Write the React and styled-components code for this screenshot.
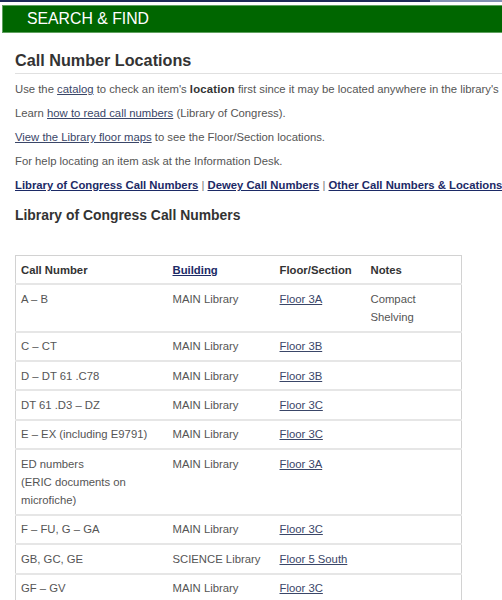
import React from "react";
import styled, { createGlobalStyle } from "styled-components";

const Global = createGlobalStyle`
  html, body { margin: 0; padding: 0; background: #fff; overflow: hidden; }
  body { font-family: "Liberation Sans", Arial, sans-serif; }
`;

const Page = styled.div`
  width: 760px;
`;

const TopStrip = styled.div`
  height: 2px;
  background: linear-gradient(to right, #1d2b58 0, #1d2b58 430px, #8392b4 430px);
`;

const Banner = styled.div`
  margin: 3px 0 0 2px;
  height: 26px;
  background: #006600;
  border: 1px solid #5fa05f;
  border-right: none;
  display: flex;
  align-items: center;
  padding-left: 24px;
  color: #fff;
  font-size: 15.8px;
`;

const Content = styled.div`
  padding: 16px 0 0 15px;
`;

const Title = styled.h1`
  margin: 0;
  font-size: 16.2px;
  line-height: 22px;
  font-weight: bold;
  color: #333;
  padding-bottom: 2px;
  border-bottom: 1px solid #e0e0e0;
`;

const Paras = styled.div`
  margin-top: 6px;
`;

const P = styled.p`
  margin: 0 0 6px;
  font-size: 11.3px;
  line-height: 18px;
  color: #555;
  white-space: nowrap;
`;

const Strong = styled.b`
  color: #333;
  letter-spacing: 0.2px;
`;

const A = styled.a`
  color: ${(p) => (p.$strong ? "#1c2a66" : "#3a4668")};
  font-weight: ${(p) => (p.$strong ? "bold" : "normal")};
  text-decoration: underline;
`;

const Sep = styled.span`
  color: #777;
`;

const Section = styled.h2`
  margin: 10px 0 29px;
  font-size: 13.9px;
  line-height: 22px;
  font-weight: bold;
  color: #333;
`;

const Table = styled.table`
  border-collapse: collapse;
  width: 446px;
  table-layout: fixed;
  border: 1px solid #d2d2d2;
  font-size: 11.3px;
  color: #555;
`;

const Col = styled.col`
  width: ${(p) => p.$w}px;
`;

const Th = styled.th`
  text-align: left;
  font-weight: bold;
  color: #333;
  padding: 5px 5px 4px 5px;
  line-height: 18.3px;
  vertical-align: top;
`;

const Td = styled.td`
  padding: 4.5px 5px;
  line-height: 18.3px;
  vertical-align: top;
  border-top: 2px solid #e6e6e6;
`;

const rows = [
  [["A – B"], "MAIN Library", "Floor 3A", "Compact Shelving"],
  [["C – CT"], "MAIN Library", "Floor 3B", ""],
  [["D – DT 61 .C78"], "MAIN Library", "Floor 3B", ""],
  [["DT 61 .D3 – DZ"], "MAIN Library", "Floor 3C", ""],
  [["E – EX (including E9791)"], "MAIN Library", "Floor 3C", ""],
  [["ED numbers", "(ERIC documents on microfiche)"], "MAIN Library", "Floor 3A", ""],
  [["F – FU, G – GA"], "MAIN Library", "Floor 3C", ""],
  [["GB, GC, GE"], "SCIENCE Library", "Floor 5 South", ""],
  [["GF – GV"], "MAIN Library", "Floor 3C", ""],
  [["H – HJ"], "MAIN Library", "Floor 3C", ""],
];

export default function App() {
  return (
    <Page>
      <Global />
      <TopStrip />
      <Banner>SEARCH &amp; FIND</Banner>
      <Content>
        <Title>Call Number Locations</Title>
        <Paras>
          <P>
            Use the <A href="#">catalog</A> to check an item's <Strong>location</Strong> first since it
            may be located anywhere in the library's collections.
          </P>
          <P>
            Learn <A href="#">how to read call numbers</A> (Library of Congress).
          </P>
          <P>
            <A href="#">View the Library floor maps</A> to see the Floor/Section locations.
          </P>
          <P>For help locating an item ask at the Information Desk.</P>
          <P>
            <A $strong href="#">Library of Congress Call Numbers</A> <Sep>|</Sep>{" "}
            <A $strong href="#">Dewey Call Numbers</A> <Sep>|</Sep>{" "}
            <A $strong href="#">Other Call Numbers &amp; Locations</A>
          </P>
        </Paras>
        <Section>Library of Congress Call Numbers</Section>
        <Table>
          <colgroup>
            <Col $w={152} />
            <Col $w={107} />
            <Col $w={91} />
            <Col $w={96} />
          </colgroup>
          <thead>
            <tr>
              <Th>Call Number</Th>
              <Th>
                <A $strong href="#">Building</A>
              </Th>
              <Th>Floor/Section</Th>
              <Th>Notes</Th>
            </tr>
          </thead>
          <tbody>
            {rows.map((r, i) => (
              <tr key={i}>
                <Td>
                  {r[0].map((line, j) => (
                    <React.Fragment key={j}>
                      {j > 0 && <br />}
                      {line}
                    </React.Fragment>
                  ))}
                </Td>
                <Td>{r[1]}</Td>
                <Td>
                  <A href="#">{r[2]}</A>
                </Td>
                <Td>{r[3]}</Td>
              </tr>
            ))}
          </tbody>
        </Table>
      </Content>
    </Page>
  );
}
